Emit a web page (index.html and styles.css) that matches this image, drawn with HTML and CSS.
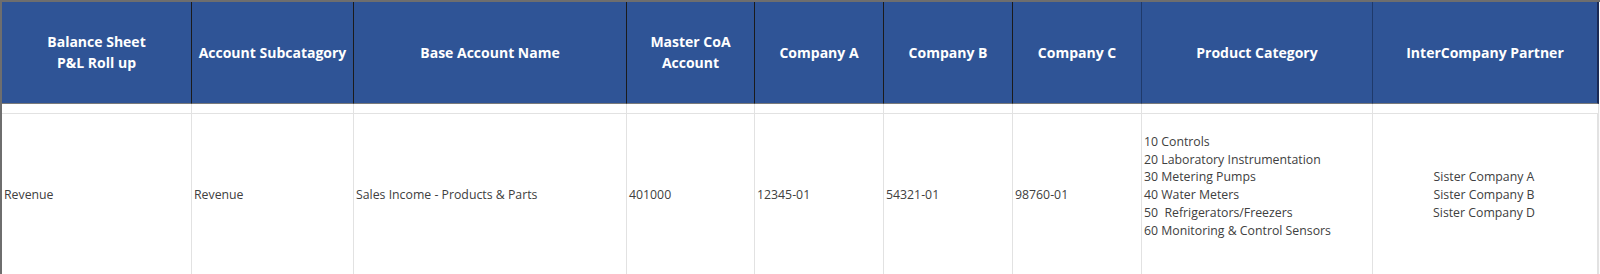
FILE: index.html
```html
<!DOCTYPE html>
<html>
<head>
<meta charset="utf-8">
<link rel="stylesheet" href="styles.css">
</head>
<body>
<div class="sheet">
  <div class="grid">
    <div class="hd">Balance Sheet<br>P&amp;L Roll up</div>
    <div class="hd">Account Subcatagory</div>
    <div class="hd">Base Account Name</div>
    <div class="hd">Master CoA<br>Account</div>
    <div class="hd">Company A</div>
    <div class="hd">Company B</div>
    <div class="hd hd-blue">Company C</div>
    <div class="hd hd-blue">Product Category</div>
    <div class="hd hd-last">InterCompany Partner</div>

    <div class="gap"></div><div class="gap"></div><div class="gap"></div>
    <div class="gap"></div><div class="gap"></div><div class="gap"></div>
    <div class="gap"></div><div class="gap"></div><div class="gap"></div>

    <div class="cell">Revenue</div>
    <div class="cell">Revenue</div>
    <div class="cell">Sales Income - Products &amp; Parts</div>
    <div class="cell">401000</div>
    <div class="cell">12345-01</div>
    <div class="cell">54321-01</div>
    <div class="cell">98760-01</div>
    <div class="cell cell-list">10 Controls<br>20 Laboratory Instrumentation<br>30 Metering Pumps<br>40 Water Meters<br>50&nbsp; Refrigerators/Freezers<br>60 Monitoring &amp; Control Sensors<br>&nbsp;</div>
    <div class="cell cell-center">Sister Company A<br>Sister Company B<br>Sister Company D</div>
  </div>
</div>
</body>
</html>
```

FILE: styles.css
```css
html, body {
  margin: 0;
  padding: 0;
  background: #ffffff;
}

.sheet {
  width: 1600px;
  height: 274px;
  overflow: hidden;
  border-top: 2px solid #6e6e6e;
  border-left: 2px solid #6e6e6e;
  box-sizing: border-box;
  background: #fbfbfb;
}

.grid {
  display: grid;
  grid-template-columns: 190px 162px 273px 128px 129px 129px 129px 231px 226px;
  grid-template-rows: 102px 10px 160px;
  width: 1596px;
  background: #ffffff;
}

.hd {
  background: #2f5496;
  color: #ffffff;
  font-family: "Open Sans", "Noto Sans", sans-serif;
  font-weight: 700;
  font-size: 14px;
  line-height: 21px;
  text-align: center;
  display: flex;
  align-items: center;
  justify-content: center;
  border-right: 1px solid #1b1b1b;
  border-bottom: 1px solid #7a7a7a;
  padding-bottom: 1px;
  box-sizing: border-box;
}

.hd-blue {
  border-right-color: #1f3a6b;
}

.hd-last {
  border-right: 2px solid #1a2a55;
}

.gap {
  border-right: 1px solid #e2e2e2;
  border-bottom: 1px solid #e2e2e2;
}

.gap:last-child {
  border-right: 2px solid #e2e2e2;
}

.cell {
  font-family: "Open Sans", "Noto Sans", sans-serif;
  font-size: 12.3px;
  line-height: 17.8px;
  color: #404040;
  display: flex;
  align-items: center;
  padding: 2px 3px 0 2px;
  border-right: 1px solid #e2e2e2;
  box-sizing: border-box;
}

.cell-center {
  justify-content: center;
  text-align: center;
  padding-right: 4px;
}

.cell:last-child {
  border-right: 2px solid #e2e2e2;
}
```
